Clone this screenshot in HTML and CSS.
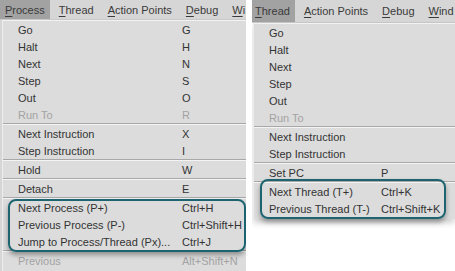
FILE: index.html
```html
<!DOCTYPE html>
<html lang="en">
<head>
    <meta charset="UTF-8">
    <title>Process and Thread menus</title>
    <link rel="stylesheet" href="styles.css">
</head>
<body>
    <div class="panel panel-process">
        <div class="menubar">
            <span class="menubar-item active"><u>P</u>rocess</span>
            <span class="menubar-item"><u>T</u>hread</span>
            <span class="menubar-item"><u>A</u>ction Points</span>
            <span class="menubar-item"><u>D</u>ebug</span>
            <span class="menubar-item"><u>W</u>i</span>
        </div>
        <div class="menu">
            <div class="row"><span class="label">Go</span><span>G</span></div>
            <div class="row"><span class="label">Halt</span><span>H</span></div>
            <div class="row"><span class="label">Next</span><span>N</span></div>
            <div class="row"><span class="label">Step</span><span>S</span></div>
            <div class="row"><span class="label">Out</span><span>O</span></div>
            <div class="row disabled"><span class="label">Run To</span><span>R</span></div>
            <div class="sep"></div>
            <div class="row"><span class="label">Next Instruction</span><span>X</span></div>
            <div class="row"><span class="label">Step Instruction</span><span>I</span></div>
            <div class="sep"></div>
            <div class="row"><span class="label">Hold</span><span>W</span></div>
            <div class="sep"></div>
            <div class="row"><span class="label">Detach</span><span>E</span></div>
            <div class="sep"></div>
            <div class="row"><span class="label">Next Process (P+)</span><span>Ctrl+H</span></div>
            <div class="row"><span class="label">Previous Process (P-)</span><span>Ctrl+Shift+H</span></div>
            <div class="row"><span class="label">Jump to Process/Thread (Px)...</span><span>Ctrl+J</span></div>
            <div class="sep"></div>
            <div class="row disabled"><span class="label">Previous</span><span>Alt+Shift+N</span></div>
            <div class="callout callout-process"></div>
        </div>
    </div>

    <div class="panel panel-thread">
        <div class="menubar">
            <span class="menubar-item active"><u>T</u>hread</span>
            <span class="menubar-item"><u>A</u>ction Points</span>
            <span class="menubar-item"><u>D</u>ebug</span>
            <span class="menubar-item"><u>W</u>ind</span>
        </div>
        <div class="menu">
            <div class="row"><span class="label">Go</span><span></span></div>
            <div class="row"><span class="label">Halt</span><span></span></div>
            <div class="row"><span class="label">Next</span><span></span></div>
            <div class="row"><span class="label">Step</span><span></span></div>
            <div class="row"><span class="label">Out</span><span></span></div>
            <div class="row disabled"><span class="label">Run To</span><span></span></div>
            <div class="sep"></div>
            <div class="row"><span class="label">Next Instruction</span><span></span></div>
            <div class="row"><span class="label">Step Instruction</span><span></span></div>
            <div class="sep"></div>
            <div class="row"><span class="label">Set PC</span><span>P</span></div>
            <div class="sep"></div>
            <div class="row"><span class="label">Next Thread (T+)</span><span>Ctrl+K</span></div>
            <div class="row"><span class="label">Previous Thread (T-)</span><span>Ctrl+Shift+K</span></div>
            <div class="callout callout-thread"></div>
        </div>
    </div>
</body>
</html>
```

FILE: styles.css
```css
/* two menu screenshots side by side */
body {
    margin: 0;
    display: flex;
    gap: 6px;
    height: 271px;
    overflow: hidden;
    background-color: #ffffff;
    font-family: "Liberation Sans", Arial, sans-serif;
    font-size: 11px;
    color: #333333;
}

.panel {
    display: flex;
    flex-direction: column;
    overflow: hidden;
}

.panel-process {
    width: 246px;
    background-color: #d6d6d6;
}

.panel-thread {
    flex: 1;
    background-color: #ffffff;
}

/* menu bar */
.menubar {
    display: flex;
    height: 19px;
    align-items: stretch;
    background-color: #d6d6d6;
    border-bottom: 1px solid #c9c9c9;
    white-space: nowrap;
}

.panel-thread .menubar {
    height: 22px;
    margin-left: -2px;
}

.menubar-item {
    display: flex;
    align-items: center;
    padding: 0 5px;
    margin-right: 4px;
    color: #3a3a3a;
}

.menubar-item.active {
    background-color: #a2a2a2;
}

.menubar-item u {
    text-decoration-thickness: 1px;
    text-underline-offset: 2px;
}

/* dropdown */
.menu {
    position: relative;
    background-color: #dcdcdc;
    border-top: 1px solid #f2f2f2;
    border-left: 1px solid #ececec;
    white-space: nowrap;
}

.panel-process .menu {
    margin-left: 2px;
    flex: 1;
}

.panel-thread .menu {
    margin-left: 1px;
    padding-bottom: 2px;
    box-shadow: 0 4px 6px rgba(0, 0, 0, 0.18);
}

.row {
    display: flex;
    align-items: center;
    height: 17px;
    padding-left: 15px;
}

.panel-process .label {
    width: 164px;
}

.panel-thread .label {
    width: 112px;
}

.row.disabled {
    color: #a3a3a3;
}

.sep {
    height: 0;
    border-top: 1px solid #a8a8a8;
    border-bottom: 1px solid #f4f4f4;
}

/* teal highlight boxes */
.callout {
    position: absolute;
    border: 2px solid #1d6470;
    border-radius: 8px;
    box-shadow: 0 3px 5px rgba(0, 0, 0, 0.35);
    box-sizing: border-box;
}

.callout-process {
    top: 178px;
    left: 5px;
    width: 238px;
    height: 53px;
}

.callout-thread {
    top: 155px;
    left: 6px;
    width: 186px;
    height: 40px;
}
```
